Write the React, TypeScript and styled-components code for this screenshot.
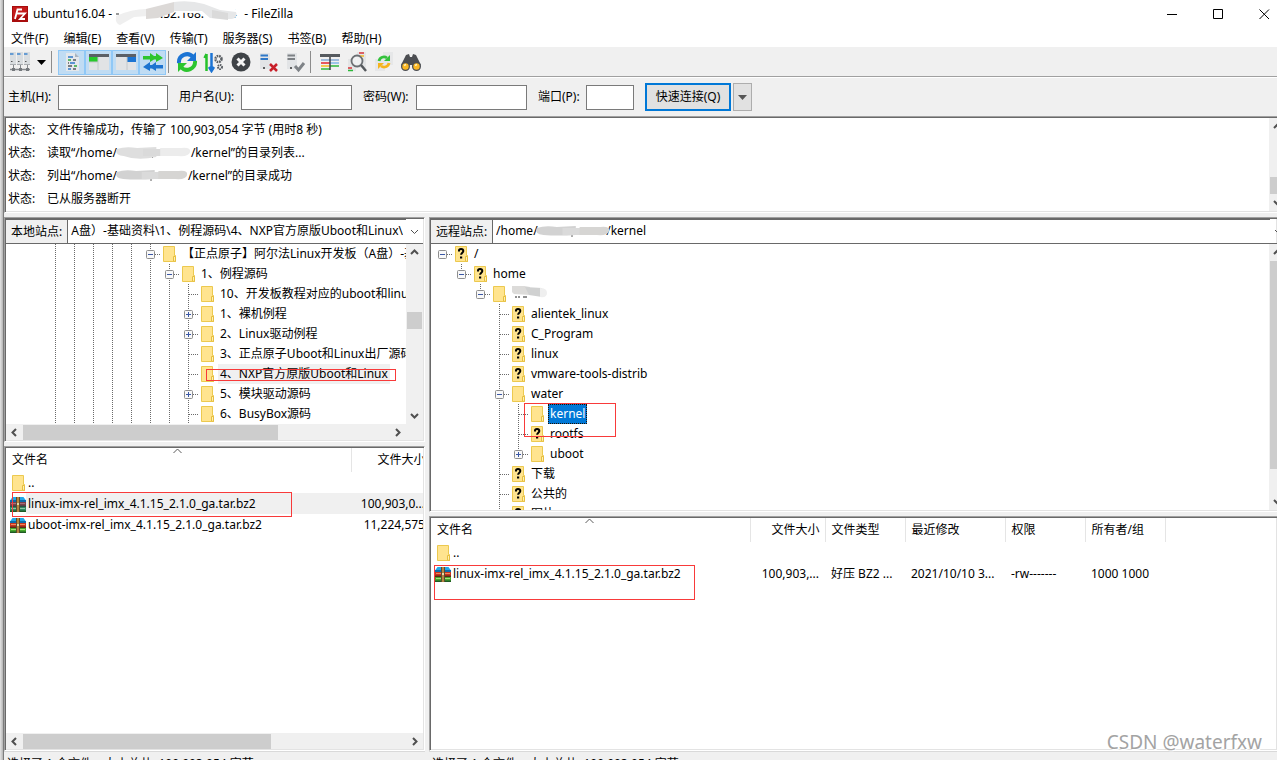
import React from 'react';
import styled, { createGlobalStyle, css } from 'styled-components';

const GlobalStyle = createGlobalStyle`
  * { box-sizing: border-box; }
  body { margin: 0; overflow: hidden; background: #f0f0f0; }
  body, input, button, table {
    font-family: "Noto Sans", "Noto Sans CJK SC", sans-serif;
    font-size: 12px;
    line-height: 16px;
    color: #000;
  }
  button { padding: 0; border: 0; background: none; }
  svg { display: block; flex: none; }
`;

const Screen = styled.div`
  position: relative;
  display: flex;
  height: 100vh;
  overflow: hidden;
`;
const Edge = styled.div`
  flex: none;
  width: 4px;
  background: linear-gradient(90deg, #e4e4e4, #b4b4b4);
  border-right: 1px solid #7c7c7c;
`;
const Window = styled.main`
  flex: 1;
  min-width: 0;
  display: flex;
  flex-direction: column;
`;

/* ---------- title and menu ---------- */
const TitleBar = styled.header`
  display: flex;
  align-items: center;
  height: 28px;
  flex: none;
  padding-left: 8px;
  background: #fff;
  white-space: pre;
`;
const Title = styled.h1`
  display: flex;
  align-items: center;
  flex: 1;
  margin: 0 0 0 5px;
  font-size: 12px;
  font-weight: 400;
`;
const Caption = styled.button`
  display: flex;
  align-items: center;
  justify-content: center;
  width: 46px;
  height: 28px;
  &:last-child { margin-right: -10px; }
`;
const Menu = styled.nav`
  display: flex;
  align-items: center;
  gap: 15px;
  flex: none;
  height: 19px;
  padding: 2px 0 0 7px;
  background: #fff;
`;
const MenuItem = styled.button`
  white-space: nowrap;
`;

/* ---------- toolbar ---------- */
const Toolbar = styled.div`
  display: flex;
  align-items: center;
  flex: none;
  height: 31px;
  padding-left: 2px;
  background: #f0f0f0;
  border-bottom: 1px solid #fff;
  box-shadow: inset 0 -1px 0 #a0a0a0;
`;
const Tool = styled.button<{ $on?: boolean; $slim?: boolean }>`
  display: flex;
  align-items: center;
  justify-content: center;
  width: ${(p) => (p.$slim ? 16 : 27)}px;
  height: 25px;
  ${(p) =>
    p.$on &&
    css`
      background: #c0dcf3;
      border: 1px solid #90c8f6;
    `}
`;
const Separator = styled.span<{ $space?: number }>`
  width: 1px;
  height: 22px;
  margin: 0 ${(p) => p.$space ?? 4}px 0 2px;
  background: #8c8c8c;
`;

/* ---------- quick connect ---------- */
const QuickBar = styled.form`
  display: flex;
  align-items: center;
  flex: none;
  height: 38px;
  padding-left: 4px;
`;
const Field = styled.label<{ $label: number; $box: number }>`
  display: grid;
  grid-template-columns: ${(p) => p.$label}px ${(p) => p.$box}px;
  align-items: center;
  margin-right: 11px;
  white-space: nowrap;
`;
const Box = styled.input`
  width: 100%;
  height: 25px;
  border: 1px solid #7a7a7a;
  background: #fff;
`;
const Connect = styled.button`
  width: 86px;
  height: 28px;
  border: 2px solid #0078d7;
  background: #e1e1e1;
`;
const ConnectMore = styled.button`
  display: flex;
  align-items: center;
  justify-content: center;
  width: 19px;
  height: 28px;
  margin-left: 2px;
  border: 1px solid #adadad;
  background: #e1e1e1;
`;

/* ---------- panels ---------- */
const sunken = css`
  border: 1px solid #a0a0a0;
  border-color: #a0a0a0 #fff #fff #a0a0a0;
  box-shadow: inset 1px 1px 0 #696969, inset -1px -1px 0 #e3e3e3;
`;
const Log = styled.section`
  ${sunken}
  display: flex;
  flex: none;
  height: 97px;
  padding: 1px 0 1px 1px;
  border-right: 0;
  background: #fff;
`;
const LogLines = styled.dl`
  flex: 1;
  display: grid;
  grid-template-columns: 39px 1fr;
  grid-auto-rows: 23px;
  align-items: center;
  margin: 0;
  padding-left: 2px;
  white-space: pre;
  dd { display: flex; align-items: center; margin: 0; }
`;
const Panes = styled.div`
  flex: 1;
  min-height: 0;
  display: flex;
  gap: 4px;
  padding-top: 4px;
`;
const Pane = styled.section<{ $width?: number }>`
  flex: ${(p) => (p.$width ? `0 0 ${p.$width}px` : '1 1 0')};
  min-width: 0;
  display: flex;
  flex-direction: column;
  gap: 4px;
`;
const Frame = styled.div<{ $height?: number; $open?: boolean }>`
  ${sunken}
  position: relative;
  flex: ${(p) => (p.$height ? `0 0 ${p.$height}px` : '1 1 0')};
  min-height: 0;
  display: flex;
  flex-direction: column;
  padding: 1px ${(p) => (p.$open ? 0 : 1)}px 1px 1px;
  border-right-width: ${(p) => (p.$open ? 0 : 1)}px;
  background: #fff;
  overflow: hidden;
`;
const SiteBar = styled.div`
  position: relative;
  display: flex;
  flex: none;
  height: 25px;
  border-bottom: 1px solid #696969;
`;
const SiteLabel = styled.label`
  flex: none;
  width: 62px;
  padding: 4px 0 0 5px;
  background: #f0f0f0;
  border-right: 1px solid #696969;
  border-top: 1px solid #696969;
  white-space: nowrap;
`;
const PathClip = styled.div`
  flex: 1;
  min-width: 0;
  display: flex;
  justify-content: flex-end;
  border-top: 1px solid #696969;
  overflow: hidden;
`;
const PathInput = styled.input<{ $tail?: boolean }>`
  flex: none;
  width: ${(p) => (p.$tail ? '370px' : '100%')};
  padding: 0 3px 1px;
  border: 0;
  background: none;
  text-align: ${(p) => (p.$tail ? 'right' : 'left')};
`;
const PathArrow = styled.button<{ $cut?: boolean }>`
  display: flex;
  align-items: center;
  justify-content: center;
  flex: none;
  width: 17px;
  margin-right: ${(p) => (p.$cut ? -10 : 0)}px;
`;
const PathMask = styled.span`
  position: absolute;
  left: 106px;
  top: 6px;
`;
const Split = styled.div`
  flex: 1;
  min-height: 0;
  display: flex;
`;
const Tree = styled.ul<{ $pad: number }>`
  flex: 1;
  min-width: 0;
  margin: 0;
  padding: 0 0 0 ${(p) => p.$pad}px;
  list-style: none;
  overflow: hidden;
`;
const TreeRow = styled.li`
  display: flex;
  align-items: center;
  height: 20px;
  white-space: nowrap;
`;
const TreeLabel = styled.span<{ $state?: 'dim' | 'sel' }>`
  height: 20px;
  margin-left: 1px;
  padding: 2px;
  ${(p) => p.$state === 'dim' && css`background: #f0f0f0;`}
  ${(p) =>
    p.$state === 'sel' &&
    css`
      background: #0078d7;
      color: #fff;
      outline: 1px dotted #201000;
      outline-offset: -1px;
    `}
`;

/* ---------- scroll bars ---------- */
const VBar = styled.div<{ $cut?: boolean }>`
  flex: none;
  display: flex;
  flex-direction: column;
  align-items: center;
  width: 17px;
  margin-right: ${(p) => (p.$cut ? -9 : 0)}px;
  background: #f0f0f0;
`;
const HBar = styled.div<{ $corner?: boolean }>`
  flex: none;
  display: flex;
  align-items: center;
  height: 16px;
  padding-right: ${(p) => (p.$corner ? 17 : 0)}px;
  background: #f0f0f0;
`;
const Thumb = styled.span<{ $size: number; $lead: number; $v?: boolean }>`
  flex: none;
  background: #cdcdcd;
  ${(p) =>
    p.$v
      ? css`width: 15px; height: ${p.$size}px; margin: ${p.$lead}px 0 auto;`
      : css`height: 15px; width: ${p.$size}px; margin: 0 auto 0 ${p.$lead}px;`}
`;

/* ---------- file lists ---------- */
const Files = styled.table`
  flex: none;
  align-self: flex-start;
  table-layout: fixed;
  border-collapse: collapse;
  width: 0;
`;
const Head = styled.th<{ $end?: boolean }>`
  position: relative;
  height: 24px;
  padding: 0 5px 0 6px;
  border-right: 1px solid #e5e5e5;
  font-weight: 400;
  text-align: ${(p) => (p.$end ? 'right' : 'left')};
  white-space: nowrap;
`;
const SortMark = styled.span`
  position: absolute;
  top: 0;
  left: 50%;
  margin-left: -5px;
`;
const Cell = styled.td<{ $end?: boolean; $dim?: boolean }>`
  height: 21px;
  padding: 0 6px;
  text-align: ${(p) => (p.$end ? 'right' : 'left')};
  white-space: nowrap;
  background: ${(p) => (p.$dim ? '#f0f0f0' : 'none')};
`;
const NameCell = styled(Cell)`
  padding: 0 0 0 4px;
  background: ${(p) => (p.$dim ? 'linear-gradient(90deg, #fff 20px, #f0f0f0 20px)' : 'none')};
`;
const Name = styled.span`
  display: flex;
  align-items: center;
  gap: 2px;
`;
const ListBody = styled.div`
  flex: 1;
  min-height: 0;
  display: flex;
  flex-direction: column;
  overflow: hidden;
`;
const Status = styled.footer`
  flex: none;
  height: 9px;
  margin-top: -4px;
  padding: 4px 0 0 3px;
  border-top: 1px solid #d9d9d9;
  white-space: nowrap;
  overflow: hidden;
`;

/* ---------- overlays ---------- */
const Mark = styled.span<{ $x: number; $y: number; $w: number; $h: number }>`
  position: absolute;
  left: ${(p) => p.$x}px;
  top: ${(p) => p.$y}px;
  width: ${(p) => p.$w}px;
  height: ${(p) => p.$h}px;
  border: 1px solid #f83a3a;
  pointer-events: none;
`;
const Watermark = styled.div`
  position: absolute;
  right: 15px;
  bottom: 4px;
  font-size: 19px;
  line-height: 28px;
  color: #a3a3a3;
  text-shadow: 1px 1px 0 #fff;
`;

/* ---------- drawings ---------- */
const chevrons = {
  up: 'M1 6 4.500 2.500 8 6',
  down: 'M1 3 4.500 6.500 8 3',
  left: 'M6 1 2.500 4.500 6 8',
  right: 'M3 1 6.500 4.500 3 8',
};
const Chevron = ({ to, thin }: { to: keyof typeof chevrons; thin?: boolean }) => (
  <svg width="17" height="17" viewBox="-4 -4 17 17" fill="none" stroke="#505050" strokeWidth={thin ? 1 : 2}>
    <path d={chevrons[to]} />
  </svg>
);
const Caret = ({ color = '#000' }: { color?: string }) => (
  <svg width="9" height="5" viewBox="0 0 9 5">
    <path d="M0 0H9L4.500 5Z" fill={color} />
  </svg>
);

const FolderIcon = ({ unknown }: { unknown?: boolean }) => (
  <svg width="19" height="16" viewBox="0 0 19 16">
    <path d="M3.500.5H14.500V9.500H15.500V15.500H3.500Z" fill="#ffe48f" stroke="#ecc94f" />
    <path d="M13.500 15V10.500H15.500V15.500Z" fill="#fff0b5" stroke="#e6bf3f" />
    {unknown && (
      <>
        <path d="M7 5.500V4.500C7 3.500 7.800 3 9 3s2.300.6 2.300 2c0 1.600-2.200 1.800-2.200 3.800" fill="none" stroke="#000" strokeWidth="2" />
        <path d="M8 10.500h2.200v2H8z" fill="#000" />
      </>
    )}
  </svg>
);
const ArchiveIcon = ({ dim }: { dim?: boolean }) => (
  <svg width="16" height="16" viewBox="0 0 16 16">
    <path d="M2.500 1H13.500L16 4.500H0Z" fill="#22a7e8" />
    <path d="M0 4H16V6H0Z" fill="#0b6cab" />
    <path d="M0 6H16V10.500H0Z" fill={dim ? '#7d3f4c' : '#c9341f'} />
    <path d="M1 7H15V8H1Z" fill={dim ? '#a4707a' : '#f0875a'} />
    <path d="M0 9.500H16V11H0Z" fill={dim ? '#2f4c45' : '#5a2a18'} />
    <path d="M0 11H16V15.500H0Z" fill={dim ? '#2f8a62' : '#45a82a'} />
    <path d="M1 12H15V13H1Z" fill={dim ? '#8cc4a6' : '#a8dc7c'} />
    <path d="M0 14.500H16V16H0Z" fill="#1f5a24" />
    <path d="M6 1H10V16H6Z" fill="#5b4a30" />
    <path d="M7 1H9V16H7Z" fill="#b5863f" />
    <path d="M7 7H9V9H7Z" fill="#e6d9a8" />
  </svg>
);

/* One 19px column of tree lines: | through, t branch, + and - expanders, ^ upper half only. */
const Guide = ({ kind }: { kind: string }) => {
  const box = kind.includes('+') || kind.includes('-');
  const up = kind.includes('|') || kind.includes('^');
  const down = kind.includes('|');
  const tick = box || kind.includes('t');
  const dots = { stroke: '#6a6a6a', strokeDasharray: '1 1' };
  return (
    <svg width="19" height="20" viewBox="0 0 19 20" fill="none">
      {up && <path d="M9.500 0V10" {...dots} />}
      {down && <path d="M9.500 10V20" {...dots} />}
      {tick && <path d="M10 10.500H20" {...dots} />}
      {box && (
        <>
          <rect x="5.500" y="6.500" width="8" height="8" rx="1" fill="#f8f8f8" stroke="#8e8e8e" />
          <path d="M7 10.500H12" stroke="#3a57a6" />
          {kind.includes('+') && <path d="M9.500 8V13" stroke="#3a57a6" />}
        </>
      )}
    </svg>
  );
};

const SmudgeArt = styled.svg`
  margin-left: -3px;
`;
const Smudge = ({ width, tall, light }: { width: number; tall?: boolean; light?: boolean }) => (
  <SmudgeArt width={width} height="14" viewBox="0 0 80 14" preserveAspectRatio="none">
    <path d="M28 3h6M40 9v3M66 8h6" stroke="#555" strokeWidth="1" />
    <path d={`M3 3Q12 0 24 2L44 1V${tall ? 11 : 10}Q24 ${tall ? 15 : 11} 10 10 0 9 3 3Z`} fill={light ? '#dedede' : '#d2d2d2'} />
    <path d="M30 3H62V10H30Z" fill="#dadada" />
    <path d="M48 2H70Q80 1 79 6 78 11 66 10H48Z" fill={light ? '#ececec' : '#d6d5d3'} />
  </SmudgeArt>
);
const TitleSmudge = () => (
  <svg width="126" height="28" viewBox="3 0 126 28">
    <path d="M4 14h3M21 13h8M26 11v4" stroke="#333" />
    <text x="48" y="18" fontSize="12">.52.168.</text>
    <text x="111" y="18" fontSize="12">44</text>
    <path d="M50 0H100L131 12V14H104L50 12Z" fill="#fff" />
    <path d="M4 16Q20 9 34 9L50 8V15L22 17 8 25Q3 24 4 16Z" fill="#efefef" />
    <path d="M34 9 62 2V12L46 18 34 19Z" fill="#dcd9d7" />
    <path d="M62 2Q78 0 92 4L108 10 124 12Q127 20 114 19L98 18 90 11 62 11Z" fill="#e6e7e8" />
    <path d="M100 10 116 13V20L100 18Z" fill="#dadada" />
  </svg>
);
const NameSmudge = () => (
  <svg width="38" height="18" viewBox="0 0 38 18">
    <path d="M3 11h2M7 10v2M11 11h4" stroke="#222" />
    <path d="M0 0Q10 -1 18 1V9L2 8Q-3 4 0 0Z" fill="#dcdbd9" />
    <path d="M13 1 30 2V11L17 9Z" fill="#d0d1d1" />
    <path d="M28 2Q35 2 35 7T28 11Z" fill="#efefef" />
  </svg>
);

const Logo = () => (
  <svg width="16" height="16" viewBox="0 0 16 16">
    <path d="M0 0H16V16H0Z" fill="#a80d0d" />
    <path d="M1 1H15V7L1 13Z" fill="#c41a1a" />
    <path d="M3 13 5.500 3.500H10M4.500 7.500H8M8 7.500H13L8 13H13" fill="none" stroke="#fff" strokeWidth="1.800" />
  </svg>
);
const Server = ({ x, y }: { x: number; y: number }) => (
  <g transform={`translate(${x} ${y})`}>
    <path d="M0 0H6V12H0Z" fill="#d9dde0" />
    <path d="M0 2H3.500" stroke="#3f86cf" strokeWidth="1.500" />
    <path d="M1 9.500h1.500" stroke="#555" />
  </g>
);
const tools: Record<string, React.ReactNode> = {
  sites: (
    <>
      <Server x={1} y={1} /><Server x={8} y={1} /><Server x={15} y={1} />
      <path d="M4.500 13v5M11.500 13v5M18.500 13v5" stroke="#85898d" fill="none" />
      <path d="M1 13.500h6M8 13.500h6M15 13.500h6" stroke="#a9adb1" />
      <path d="M1 18.500H21" stroke="#85898d" strokeWidth="1.500" />
      <path d="M3 17h3v3h-3zM10 17h3v3h-3zM17 17h3v3h-3z" fill="#74787c" />
    </>
  ),
  log: (
    <>
      <path d="M5 2H14L18 6V20H5Z" fill="#e4e8ec" /><path d="M14 2V6H18Z" fill="#a8b4c0" />
      <path d="M7 6H12M9 12H14M7 18H10" stroke="#2f78c8" strokeWidth="1.500" />
      <path d="M7 9H10M13 15H16" stroke="#2eaa3c" strokeWidth="1.500" />
      <path d="M12 9H15M7 15H11M12 18H15M7 12H8" stroke="#55585c" strokeWidth="1.500" />
    </>
  ),
  local: (
    <>
      <path d="M1 3H21V19H1Z" fill="#e1e3e5" /><path d="M1 3H21V6H1Z" fill="#5b6066" />
      <path d="M1 6H10V11H1Z" fill="#28c82c" /><path d="M10 6V19M10 11H1" stroke="#c4c8cb" />
    </>
  ),
  remote: (
    <>
      <path d="M1 3H21V19H1Z" fill="#e1e3e5" /><path d="M1 3H21V6H1Z" fill="#5b6066" />
      <path d="M12 6H21V11H12Z" fill="#1b74d2" /><path d="M12 6V19" stroke="#c4c8cb" />
    </>
  ),
  queue: (
    <>
      <path d="M1 5H8V2L12 5H14V2L21 7 14 11V8.500H12L8 11V8.500H1Z" fill="#2dc52d" />
      <path d="M21 14H14V11L10 14H8V11L1 16 8 20V17.500H10L14 20V17.500H21Z" fill="#1d74d0" />
    </>
  ),
  refresh: (
    <>
      <path d="M3 12A8 8 0 0 1 17 6" fill="none" stroke="#1c74d4" strokeWidth="4" /><path d="M20 1V10H11Z" fill="#1c74d4" />
      <path d="M19 10A8 8 0 0 1 5 16" fill="none" stroke="#2cc52f" strokeWidth="4" /><path d="M2 21V12H11Z" fill="#2cc52f" />
    </>
  ),
  process: (
    <>
      <path d="M3.500 20V3M1.500 7 3.500 3" fill="none" stroke="#27c12b" strokeWidth="2.500" />
      <path d="M8.500 2V19M11 16 8.500 20 6 16" fill="none" stroke="#1c74d4" strokeWidth="2.500" />
      <circle cx="15.500" cy="8" r="3" fill="none" stroke="#5a5f64" strokeWidth="2.500" strokeDasharray="1.600 .8" />
      <circle cx="17" cy="16" r="2" fill="none" stroke="#5a5f64" strokeWidth="2" strokeDasharray="1.400 .7" />
    </>
  ),
  cancel: (
    <>
      <circle cx="11" cy="11" r="9.500" fill="#3f4347" />
      <path d="M7.500 7.500 14.500 14.500M14.500 7.500 7.500 14.500" stroke="#f4f4f4" strokeWidth="3" />
    </>
  ),
  disconnect: (
    <>
      <path d="M3 2H13V18H3Z" fill="#e2e4e6" /><path d="M3.500 4.500H11M3.500 8H11" stroke="#2f78c8" strokeWidth="2" />
      <path d="M6 17h2" stroke="#333" strokeWidth="1.500" /><path d="M13 13 20 20M20 13 13 20" stroke="#c8202a" strokeWidth="2.500" />
    </>
  ),
  reconnect: (
    <>
      <path d="M3 2H13V18H3Z" fill="#e2e4e6" /><path d="M3.500 4.500H11M3.500 8H11" stroke="#7c8084" strokeWidth="2" />
      <path d="M6 17h2" stroke="#333" strokeWidth="1.500" /><path d="M11 15 14.500 19 20 12" fill="none" stroke="#7f8387" strokeWidth="3" />
    </>
  ),
  filter: (
    <>
      <path d="M1 3H21V6H1Z" fill="#555a5f" /><path d="M2 9H20" stroke="#4e86c6" />
      <path d="M2 12H11" stroke="#e3272c" strokeWidth="1.500" /><path d="M11 12H20" stroke="#4a9be0" />
      <path d="M2 15H11" stroke="#f4c121" strokeWidth="1.500" /><path d="M2 18H11M11 15H20" stroke="#2cb83a" strokeWidth="1.500" />
      <path d="M11 6V19" stroke="#3e4246" strokeWidth="1.500" />
    </>
  ),
  compare: (
    <>
      <path d="M11 1H20V17H11ZM2 8H10V20H2Z" fill="#e4e5e6" />
      <path d="M13 2H18M2 17H6" stroke="#d8343a" strokeWidth="1.500" /><path d="M14 5H18" stroke="#f0b725" strokeWidth="1.500" /><path d="M2 19.500H7" stroke="#2cb83a" strokeWidth="1.500" />
      <circle cx="11" cy="10" r="5.500" fill="#f1f3f4" fillOpacity=".8" stroke="#6b6f73" strokeWidth="1.800" />
      <path d="M15 14 20 20" stroke="#55595d" strokeWidth="2.500" />
    </>
  ),
  sync: (
    <>
      <path d="M10 1H20V14H10ZM2 8H12V20H2Z" fill="#e6e7e8" />
      <path d="M6 10A5 5 0 0 1 14 7" fill="none" stroke="#34c23c" strokeWidth="2.800" /><path d="M17 4V10H11Z" fill="#34c23c" />
      <path d="M16 12A5 5 0 0 1 8 15" fill="none" stroke="#f6b41c" strokeWidth="2.800" /><path d="M5 18V12H11Z" fill="#f6b41c" />
    </>
  ),
  find: (
    <>
      <path d="M6 4 9 3 10 6H12L13 3 16 4 21 14 17 19 12 14H10L5 19 1 14Z" fill="#4c4e52" />
      <circle cx="5.500" cy="15.500" r="4.500" fill="#4c4e52" /><circle cx="16.500" cy="15.500" r="4.500" fill="#4c4e52" />
      <circle cx="5.500" cy="15.500" r="3.200" fill="#fbb723" /><circle cx="16.500" cy="15.500" r="3.200" fill="#fbb723" />
      <path d="M4 14.500l2-1M15 14.500l2-1" stroke="#fff0b8" strokeWidth="1.500" />
    </>
  ),
};
const ToolIcon = ({ name }: { name: string }) => (
  <svg width="22" height="22" viewBox="0 0 22 22">{tools[name]}</svg>
);

/* ---------- data ---------- */
type Node = { guides: string[]; label: React.ReactNode; icon?: 'unknown'; state?: 'dim' | 'sel' };
const bars = (n: number) => Array<string>(n).fill('|');
const localTree: Node[] = [
  { guides: [...bars(5), '|-'], label: '【正点原子】阿尔法Linux开发板（A盘）-基础资料' },
  { guides: [...bars(6), '|-'], label: '1、例程源码' },
  { guides: [...bars(7), '|t'], label: '10、开发板教程对应的uboot和linux源码' },
  { guides: [...bars(7), '|+'], label: '1、裸机例程' },
  { guides: [...bars(7), '|+'], label: '2、Linux驱动例程' },
  { guides: [...bars(7), '|t'], label: '3、正点原子Uboot和Linux出厂源码' },
  { guides: [...bars(7), '|t'], label: '4、NXP官方原版Uboot和Linux', state: 'dim' },
  { guides: [...bars(7), '|+'], label: '5、模块驱动源码' },
  { guides: [...bars(7), '|t'], label: '6、BusyBox源码' },
];
const remoteTree: Node[] = [
  { guides: ['-'], label: '/', icon: 'unknown' },
  { guides: ['', '^-'], label: 'home', icon: 'unknown' },
  { guides: ['', '', '^-'], label: <NameSmudge /> },
  { guides: ['', '', '', '|t'], label: 'alientek_linux', icon: 'unknown' },
  { guides: ['', '', '', '|t'], label: 'C_Program', icon: 'unknown' },
  { guides: ['', '', '', '|t'], label: 'linux', icon: 'unknown' },
  { guides: ['', '', '', '|t'], label: 'vmware-tools-distrib', icon: 'unknown' },
  { guides: ['', '', '', '|-'], label: 'water' },
  { guides: ['', '', '', '|', '|t'], label: 'kernel', state: 'sel' },
  { guides: ['', '', '', '|', '|t'], label: 'rootfs', icon: 'unknown' },
  { guides: ['', '', '', '|', '^+'], label: 'uboot' },
  { guides: ['', '', '', '|t'], label: '下载', icon: 'unknown' },
  { guides: ['', '', '', '|t'], label: '公共的', icon: 'unknown' },
  { guides: ['', '', '', '|t'], label: '图片', icon: 'unknown' },
];
const TreeView = ({ nodes, pad }: { nodes: Node[]; pad: number }) => (
  <Tree $pad={pad}>
    {nodes.map((n, i) => (
      <TreeRow key={i}>
        {n.guides.map((g, j) => <Guide key={j} kind={g} />)}
        <FolderIcon unknown={n.icon === 'unknown'} />
        <TreeLabel $state={n.state}>{n.label}</TreeLabel>
      </TreeRow>
    ))}
  </Tree>
);

type Column = { title: string; width: number; end?: boolean };
type FileRow = { name: string; cells: string[]; dim?: boolean };
const FileTable = ({ columns, rows }: { columns: Column[]; rows: FileRow[] }) => (
  <Files>
    <colgroup>
      {columns.map((c) => <col key={c.title} width={c.width} />)}
    </colgroup>
    <thead>
      <tr>
        {columns.map((c, i) => (
          <Head key={c.title} $end={c.end}>
            {c.title}
            {i === 0 && (
              <SortMark>
                <svg width="9" height="6" viewBox="0 0 9 6" fill="none" stroke="#5a5a5a"><path d="M.5 5 4.500 1 8.500 5" /></svg>
              </SortMark>
            )}
          </Head>
        ))}
      </tr>
    </thead>
    <tbody>
      {rows.map((r) => (
        <tr key={r.name}>
          <NameCell $dim={r.dim}>
            <Name>
              {r.name === '..' ? <svg width="16" height="16" viewBox="1 0 16 16"><FolderIcon /></svg> : <ArchiveIcon dim={r.dim} />}
              {r.name}
            </Name>
          </NameCell>
          {columns.slice(1).map((c, i) => (
            <Cell key={c.title} $end={c.end} $dim={r.dim}>{r.cells[i]}</Cell>
          ))}
        </tr>
      ))}
    </tbody>
  </Files>
);
const localColumns: Column[] = [
  { title: '文件名', width: 345 },
  { title: '文件大小', width: 80, end: true },
];
const localFiles: FileRow[] = [
  { name: '..', cells: [] },
  { name: 'linux-imx-rel_imx_4.1.15_2.1.0_ga.tar.bz2', cells: ['100,903,0...'], dim: true },
  { name: 'uboot-imx-rel_imx_4.1.15_2.1.0_ga.tar.bz2', cells: ['11,224,575'] },
];
const remoteColumns: Column[] = [
  { title: '文件名', width: 319 },
  { title: '文件大小', width: 75, end: true },
  { title: '文件类型', width: 80 },
  { title: '最近修改', width: 100 },
  { title: '权限', width: 80 },
  { title: '所有者/组', width: 80 },
];
const remoteFiles: FileRow[] = [
  { name: '..', cells: [] },
  {
    name: 'linux-imx-rel_imx_4.1.15_2.1.0_ga.tar.bz2',
    cells: ['100,903,...', '好压 BZ2 ...', '2021/10/10 3...', '-rw-------', '1000 1000'],
  },
];
const menus = ['文件(F)', '编辑(E)', '查看(V)', '传输(T)', '服务器(S)', '书签(B)', '帮助(H)'];
const hiddenPath = '/home/' + '\u00a0'.repeat(22) + '/kernel';

export default function App() {
  return (
    <>
      <GlobalStyle />
      <Screen>
        <Edge />
        <Window>
          <TitleBar>
            <Logo />
            <Title>
              ubuntu16.04 - <TitleSmudge /> - FileZilla
            </Title>
            <Caption aria-label="最小化"><svg width="11" height="11" fill="none" stroke="#000"><path d="M0 5.500H10" /></svg></Caption>
            <Caption aria-label="最大化"><svg width="11" height="11" fill="none" stroke="#000"><path d="M.5.5H9.500V9.500H.5Z" /></svg></Caption>
            <Caption aria-label="关闭"><svg width="11" height="11" fill="none" stroke="#000"><path d="M.5.5 10 10M10 .5.5 10" /></svg></Caption>
          </TitleBar>
          <Menu>
            {menus.map((m) => <MenuItem key={m}>{m}</MenuItem>)}
          </Menu>
          <Toolbar>
            <Tool aria-label="站点管理器"><ToolIcon name="sites" /></Tool>
            <Tool $slim aria-label="站点列表"><Caret /></Tool>
            <Separator $space={6} />
            {['log', 'local', 'remote', 'queue'].map((t) => <Tool key={t} $on aria-label={t}><ToolIcon name={t} /></Tool>)}
            <Separator />
            {['refresh', 'process', 'cancel', 'disconnect', 'reconnect'].map((t) => <Tool key={t} aria-label={t}><ToolIcon name={t} /></Tool>)}
            <Separator $space={5} />
            {['filter', 'compare', 'sync', 'find'].map((t) => <Tool key={t} aria-label={t}><ToolIcon name={t} /></Tool>)}
          </Toolbar>
          <QuickBar>
            <Field $label={50} $box={110}>主机(H):<Box /></Field>
            <Field $label={62} $box={111}>用户名(U):<Box /></Field>
            <Field $label={53} $box={111}>密码(W):<Box type="password" /></Field>
            <Field $label={48} $box={48}>端口(P):<Box /></Field>
            <Connect type="button">快速连接(Q)</Connect>
            <ConnectMore type="button" aria-label="历史"><Caret color="#555" /></ConnectMore>
          </QuickBar>
          <Log>
            <LogLines>
              <dt>状态:</dt><dd>文件传输成功，传输了 100,903,054 字节 (用时8 秒)</dd>
              <dt>状态:</dt><dd>读取“/home/<Smudge width={77} tall light />/kernel”的目录列表...</dd>
              <dt>状态:</dt><dd>列出“/home/<Smudge width={74} />/kernel”的目录成功</dd>
              <dt>状态:</dt><dd>已从服务器断开</dd>
            </LogLines>
            <VBar $cut>
              <Chevron to="up" />
              <Thumb $v $size={17} $lead={42} />
              <Chevron to="down" />
            </VBar>
          </Log>
          <Panes>
            <Pane $width={421}>
              <Frame $height={225}>
                <SiteBar>
                  <SiteLabel htmlFor="local-path">本地站点:</SiteLabel>
                  <PathClip>
                    <PathInput id="local-path" $tail defaultValue="A盘）-基础资料\1、例程源码\4、NXP官方原版Uboot和Linux\" />
                  </PathClip>
                  <PathArrow aria-label="展开"><Chevron to="down" thin /></PathArrow>
                </SiteBar>
                <Split>
                  <TreeView nodes={localTree} pad={40} />
                  <VBar>
                    <Chevron to="up" />
                    <Thumb $v $size={17} $lead={51} />
                    <Chevron to="down" />
                  </VBar>
                </Split>
                <HBar $corner>
                  <Chevron to="left" />
                  <Thumb $size={255} $lead={0} />
                  <Chevron to="right" />
                </HBar>
                <Mark $x={201} $y={151} $w={190} $h={12} />
              </Frame>
              <Frame>
                <ListBody>
                  <FileTable columns={localColumns} rows={localFiles} />
                </ListBody>
                <HBar>
                  <Chevron to="left" />
                  <Thumb $size={248} $lead={0} />
                  <Chevron to="right" />
                </HBar>
                <Mark $x={7} $y={45} $w={280} $h={25} />
              </Frame>
              <Status>选择了 1 个文件。大小总共: 100,903,054 字节</Status>
            </Pane>
            <Pane>
              <Frame $height={295} $open>
                <SiteBar>
                  <SiteLabel htmlFor="remote-path">远程站点:</SiteLabel>
                  <PathClip>
                    <PathInput id="remote-path" defaultValue={hiddenPath} />
                  </PathClip>
                  <PathMask><Smudge width={76} /></PathMask>
                  <PathArrow $cut aria-label="展开"><Chevron to="down" thin /></PathArrow>
                </SiteBar>
                <Split>
                  <TreeView nodes={remoteTree} pad={2} />
                  <VBar $cut>
                    <Chevron to="up" />
                    <Thumb $v $size={208} $lead={0} />
                    <Chevron to="down" />
                  </VBar>
                </Split>
                <Mark $x={94} $y={185} $w={92} $h={34} />
              </Frame>
              <Frame $open>
                <ListBody>
                  <FileTable columns={remoteColumns} rows={remoteFiles} />
                </ListBody>
                <Mark $x={4} $y={48} $w={261} $h={35} />
              </Frame>
              <Status>选择了 1 个文件。大小总共: 100,903,054 字节</Status>
            </Pane>
          </Panes>
        </Window>
        <Watermark>CSDN @waterfxw</Watermark>
      </Screen>
    </>
  );
}
